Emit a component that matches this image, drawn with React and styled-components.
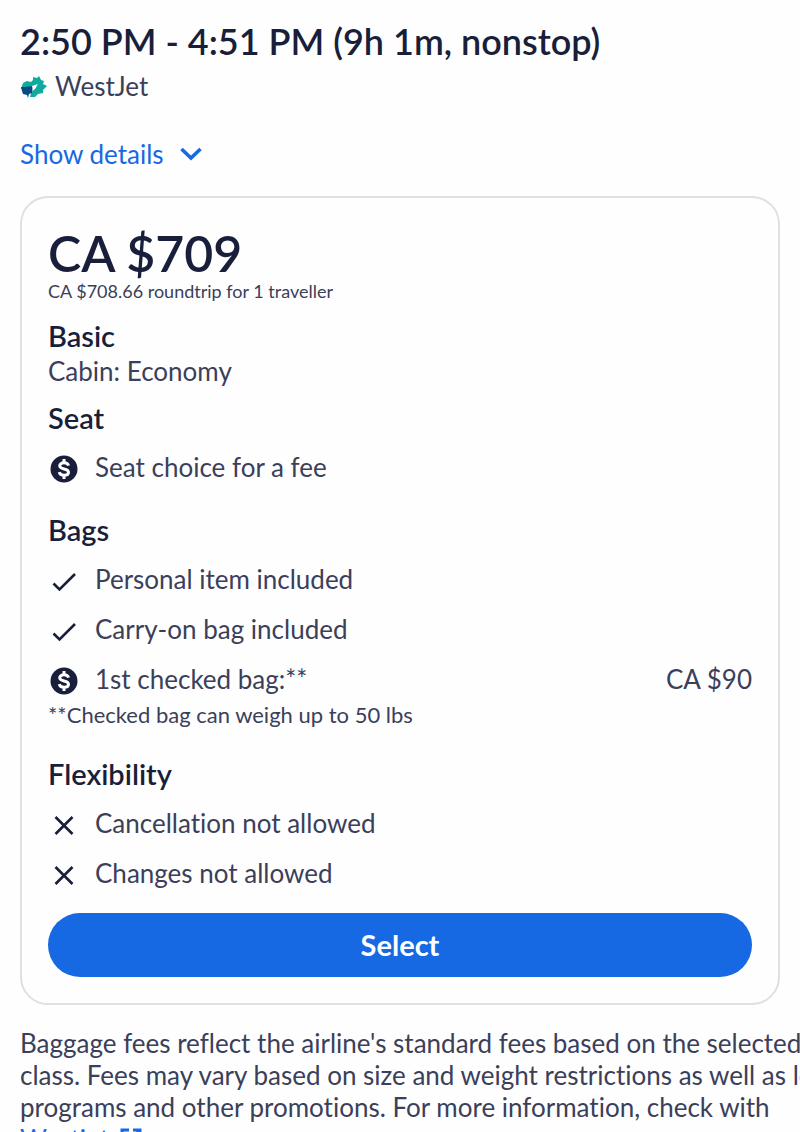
import React from 'react'
import styled, { createGlobalStyle } from 'styled-components'

const GlobalStyle = createGlobalStyle`
  * {
    box-sizing: border-box;
  }
  body {
    margin: 0;
    background: #fefefe;
    color: #191e3b;
    font-family: Lato, "Liberation Sans", sans-serif;
    font-size: 26px;
    line-height: 32px;
    font-variant-ligatures: none;
    overflow-x: hidden;
  }
  h1, h2, h3, p, ul {
    margin: 0;
    padding: 0;
    font-weight: 400;
  }
`

const Page = styled.main`
  padding: 19px 20px 24px;
`

const FlightTime = styled.h1`
  font-size: 36px;
  line-height: 44px;
  font-weight: 600;
`

const Airline = styled.div`
  display: flex;
  align-items: center;
  gap: 8px;
  margin-top: 7px;
  color: #3b3f5a;

  svg {
    margin-top: 4px;
  }
`

const DetailsButton = styled.button`
  display: flex;
  align-items: center;
  gap: 16px;
  margin-top: 36px;
  padding: 0;
  border: 0;
  background: none;
  color: #1668e3;
  font: inherit;
  cursor: pointer;
`

const FareCard = styled.section`
  margin-top: 26px;
  padding: 29px 26px 26px;
  border: 2px solid #dfe0e4;
  border-radius: 28px;
`

const Price = styled.h2`
  font-size: 50px;
  line-height: 52px;
  font-weight: 600;
`

const SmallText = styled.p`
  font-size: 18px;
  line-height: 24px;
  color: #3b3f5a;
`

const BagNote = styled(SmallText)`
  margin-top: 8px;
  font-size: 22px;
`

const Heading = styled.h3`
  margin-top: ${({ $top }) => $top}px;
  font-size: 29px;
  line-height: 34px;
  font-weight: 600;
`

const Cabin = styled.p`
  margin-top: 2px;
  color: #3b3f5a;
`

const Features = styled.ul`
  display: flex;
  flex-direction: column;
  gap: 18px;
  margin-top: 16px;
  list-style: none;
`

const FeatureRow = styled.li`
  display: flex;
  align-items: flex-start;
  gap: 15px;
  height: 32px;
  color: #3b3f5a;

  svg {
    flex: none;
    margin-top: 2px;
    color: #191e3b;
  }
`

const Amount = styled.span`
  margin-left: auto;
`

const SelectButton = styled.button`
  display: block;
  width: 100%;
  height: 64px;
  margin-top: 24px;
  border: 0;
  border-radius: 32px;
  background: #1668e3;
  color: #fff;
  font: inherit;
  font-size: 29px;
  font-weight: 700;
  cursor: pointer;
`

const BaggageNote = styled.p`
  margin-top: 22px;
  color: #3b3f5a;
  white-space: nowrap;
`

const AirlineLink = styled.a`
  display: inline-flex;
  align-items: center;
  gap: 10px;
  color: #1668e3;
  text-decoration: none;
`

const WestJetLogo = () => (
  <svg width="27" height="26" viewBox="0 0 27 26" aria-hidden="true">
    <path fill="#10ab9f" d="M3 8l4-2 4 1 2-2 0-3 4 1 2-2 2 4 3 1-1 3 4 2-4 4 0 3-5 1-3 3-5 0 1-4 5-6-9 2-6 0z" />
    <path fill="#0b4a80" d="M1 12l4 0 8-1-1 7-3 1-1 4-1-3-4-1-1-3z" />
    <path fill="#fff" d="M12 11l6-2-3 5-2 1z" />
  </svg>
)

const icons = {
  fee: (
    <>
      <circle cx="16" cy="16" r="13.5" fill="currentColor" />
      <path
        d="M20.6 12.6c-.6-1.8-2.3-2.8-4.6-2.8-2.6 0-4.3 1.2-4.3 3 0 4.2 8.8 2.1 8.8 6.4 0 1.9-1.8 3.1-4.4 3.1-2.6 0-4.4-1.1-4.9-3.1M16 6v4M16 22v4"
        fill="none"
        stroke="#fff"
        strokeWidth="3"
      />
    </>
  ),
  check: <path d="M5.5 18.5l6 6L27 9" fill="none" stroke="currentColor" strokeWidth="2.6" />,
  cross: <path d="M7.5 8l17 17M24.5 8l-17 17" fill="none" stroke="currentColor" strokeWidth="2.6" />,
}

const Feature = ({ icon, amount, children }) => (
  <FeatureRow>
    <svg width="32" height="32" viewBox="0 0 32 32" aria-hidden="true">
      {icons[icon]}
    </svg>
    <span>{children}</span>
    {amount && <Amount>{amount}</Amount>}
  </FeatureRow>
)

const App = () => {
  return (
    <Page>
      <GlobalStyle />
      <FlightTime>2:50 PM - 4:51 PM (9h 1m, nonstop)</FlightTime>
      <Airline>
        <WestJetLogo />
        <span>WestJet</span>
      </Airline>
      <DetailsButton type="button">
        Show details
        <svg width="22" height="14" viewBox="0 0 22 14" aria-hidden="true">
          <path d="M1.5 2l9.5 9 9.5-9" fill="none" stroke="currentColor" strokeWidth="3.6" />
        </svg>
      </DetailsButton>

      <FareCard>
        <Price>CA $709</Price>
        <SmallText>CA $708.66 roundtrip for 1 traveller</SmallText>
        <Heading $top={16}>Basic</Heading>
        <Cabin>Cabin: Economy</Cabin>

        <Heading $top={14}>Seat</Heading>
        <Features>
          <Feature icon="fee">Seat choice for a fee</Feature>
        </Features>

        <Heading $top={30}>Bags</Heading>
        <Features>
          <Feature icon="check">Personal item included</Feature>
          <Feature icon="check">Carry-on bag included</Feature>
          <Feature icon="fee" amount="CA $90">1st checked bag:**</Feature>
        </Features>
        <BagNote>**Checked bag can weigh up to 50 lbs</BagNote>

        <Heading $top={30}>Flexibility</Heading>
        <Features>
          <Feature icon="cross">Cancellation not allowed</Feature>
          <Feature icon="cross">Changes not allowed</Feature>
        </Features>
        <SelectButton type="button">Select</SelectButton>
      </FareCard>

      <BaggageNote>
        Baggage fees reflect the airline's standard fees based on the selected
        <br />
        class. Fees may vary based on size and weight restrictions as well as loyalty
        <br />
        programs and other promotions. For more information, check with
        <br />
        <AirlineLink href="#westjet">
          Westjet
          <svg width="24" height="24" viewBox="0 0 24 24" aria-hidden="true">
            <path d="M10 3H3v18h17v-7M14 3h7v7M21 3L10 14" fill="none" stroke="currentColor" strokeWidth="3" />
          </svg>
        </AirlineLink>
      </BaggageNote>
    </Page>
  )
}

export default App
